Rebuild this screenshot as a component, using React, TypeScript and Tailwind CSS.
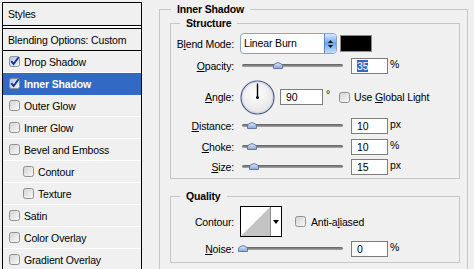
import React from "react";

function Box({ checked = false }: { checked?: boolean }) {
  return (
    <svg width="11" height="11" viewBox="0 0 11 11" className="shrink-0">
      <defs>
        <linearGradient id="cbu" x1="0" y1="0" x2="1" y2="1">
          <stop offset="0" stopColor="#d2d2d2" />
          <stop offset="1" stopColor="#fbfbfb" />
        </linearGradient>
        <linearGradient id="cbc" x1="0" y1="0" x2="1" y2="1">
          <stop offset="0" stopColor="#a9c6ee" />
          <stop offset="1" stopColor="#f3f8ff" />
        </linearGradient>
      </defs>
      <rect x="0.5" y="0.5" width="10" height="10" rx="2" fill={checked ? "url(#cbc)" : "url(#cbu)"} stroke="#8f9092" />
      {checked && <path d="M2.3 5.2 L4.6 8 L9.6 1.2" fill="none" stroke="#1c2f86" strokeWidth="1.9" />}
    </svg>
  );
}

function Slider({ pos }: { pos: number }) {
  return (
    <div className="relative w-[101px] h-[10px] ml-[8px] shrink-0">
      <div className="absolute left-0 right-0 top-[3px] h-[3px] rounded-full bg-gradient-to-b from-[#5e5e5e] to-[#a8a8a8]" />
      <svg className="absolute top-[1px]" style={{ left: pos - 5 }} width="10" height="7" viewBox="0 0 10 7">
        <defs>
          <linearGradient id="thg" x1="0" y1="0" x2="0" y2="1">
            <stop offset="0" stopColor="#e6eefb" />
            <stop offset="1" stopColor="#86a3d8" />
          </linearGradient>
        </defs>
        <path d="M0.5 6.5 V4 Q0.5 2.5 2 1.8 L5 0.5 L8 1.8 Q9.5 2.5 9.5 4 V6.5 Z" fill="url(#thg)" stroke="#6279ad" />
      </svg>
    </div>
  );
}

function Num({ children, w = "w-[37px]" }: { children: React.ReactNode; w?: string }) {
  return (
    <div className={`${w} h-[16px] shrink-0 border border-[#7d7d7d] bg-white pl-[5px] leading-[14px]`}>{children}</div>
  );
}

function Label({ children }: { children: React.ReactNode }) {
  return <div className="w-[63px] shrink-0 text-right whitespace-nowrap">{children}</div>;
}

function SliderRow({ label, pos, value, unit, sel = false }: { label: React.ReactNode; pos: number; value: string; unit: string; sel?: boolean }) {
  return (
    <div className="flex items-center h-[16px]">
      <Label>{label}</Label>
      <Slider pos={pos} />
      <div className="ml-[8px]">
        <Num>{sel ? <span className="bg-[#316ac5] text-white">{value}</span> : value}</Num>
      </div>
      <span className="ml-[2px] -mt-[4px]">{unit}</span>
    </div>
  );
}

const items = [
  { label: "Drop Shadow", checked: true },
  { label: "Inner Shadow", checked: true, sel: true },
  { label: "Outer Glow" },
  { label: "Inner Glow" },
  { label: "Bevel and Emboss" },
  { label: "Contour", sub: true },
  { label: "Texture", sub: true },
  { label: "Satin" },
  { label: "Color Overlay" },
  { label: "Gradient Overlay" },
];

const groupBox = "border border-[#c6c6c6] shadow-[inset_1px_1px_0_#ffffff,1px_1px_0_#ffffff]";

export default function App() {
  return (
    <div className="w-[474px] h-[269px] overflow-hidden bg-[#f0f0f0] flex items-start font-['Tahoma','Liberation_Sans',Arial,sans-serif] text-[10.5px] tracking-[-0.15px] leading-[14px] text-black">
      {/* Left styles list */}
      <div className="ml-[2px] mt-[2px] w-[140px] shrink-0 border-x border-t border-black bg-[#f0f0f0]">
        <div className="h-[23px] border-b border-black pl-[5px] flex items-center">Styles</div>
        <div className="h-[2px] bg-white" />
        <div className="h-[23px] border-y border-black pl-[5px] flex items-center">Blending Options: Custom</div>
        {items.map((it) => (
          <div
            key={it.label}
            className={`h-[22px] border-b flex items-center gap-[4px] ${it.sub ? "pl-[20px]" : "pl-[6px]"} ${
              it.sel ? "bg-[#316ac5] border-[#316ac5] text-white font-bold" : "border-white"
            }`}
          >
            <Box checked={!!it.checked} />
            <span>{it.label}</span>
          </div>
        ))}
      </div>

      {/* Right settings */}
      <fieldset className="ml-[17px] mt-[2px] w-[309px] shrink-0 border border-[#c6c6c6] pl-[10px] pr-[7px] pb-[20px] min-w-0">
        <legend className="ml-[1px] px-[6px] font-bold leading-[14px]">Inner Shadow</legend>

        <fieldset className="border border-[#c6c6c6] pt-[3px] pb-[3px] min-w-0">
          <legend className="ml-[9px] px-[6px] font-bold leading-[14px]">Structure</legend>

          <div className="flex items-center h-[21px]">
            <Label>
              B<u>l</u>end Mode:
            </Label>
            <div className="ml-[6px] w-[97px] h-[21px] flex rounded-[4px] border border-[#8aa3c2] bg-white overflow-hidden shrink-0">
              <span className="flex-1 pl-[3px] leading-[19px] whitespace-nowrap">Linear Burn</span>
              <div className="w-[12px] rounded-r-[3px] border-l border-[#5b87c7] bg-gradient-to-b from-[#d6e7fd] via-[#6aa5ec] to-[#c6e0fb] flex flex-col items-center justify-center gap-[2px]">
                <svg width="5" height="3" viewBox="0 0 5 3">
                  <path d="M2.5 0 L5 3 H0 Z" fill="#111" />
                </svg>
                <svg width="5" height="3" viewBox="0 0 5 3">
                  <path d="M0 0 H5 L2.5 3 Z" fill="#111" />
                </svg>
              </div>
            </div>
            <div className="ml-[3px] w-[32px] h-[17px] border border-[#8a8a8a] bg-black shrink-0" />
          </div>

          <div className="mt-[4px]">
            <SliderRow label={<><u>O</u>pacity:</>} pos={36} value="35" unit="%" sel />
          </div>

          <div className="mt-[5px] flex items-center h-[36px]">
            <Label>
              <u>A</u>ngle:
            </Label>
            <svg className="ml-[6px] shrink-0" width="35" height="35" viewBox="0 0 35 35">
              <defs>
                <radialGradient id="dial" cx="0.45" cy="0.4" r="0.6">
                  <stop offset="0" stopColor="#ffffff" />
                  <stop offset="1" stopColor="#e4e4e4" />
                </radialGradient>
              </defs>
              <circle cx="17.5" cy="17.5" r="16.5" fill="url(#dial)" stroke="#4b5a84" strokeWidth="1.2" />
              <circle cx="17.5" cy="17.5" r="15.3" fill="none" stroke="#c9cfdd" strokeWidth="0.8" />
              <line x1="17.5" y1="17.5" x2="17.5" y2="3.5" stroke="#000" strokeWidth="1.4" />
              <circle cx="17.5" cy="17.5" r="1.5" fill="#000" />
            </svg>
            <div className="ml-[5px]">
              <Num w="w-[43px]">90</Num>
            </div>
            <span className="ml-[3px] w-[13px] -mt-[6px] shrink-0">°</span>
            <Box />
            <span className="ml-[4px] whitespace-nowrap">
              Use <u>G</u>lobal Light
            </span>
          </div>

          <div className="mt-[3px]">
            <SliderRow label={<><u>D</u>istance:</>} pos={10} value="10" unit="px" />
          </div>
          <div className="mt-[5px]">
            <SliderRow label={<><u>C</u>hoke:</>} pos={10} value="10" unit="%" />
          </div>
          <div className="mt-[4px]">
            <SliderRow label={<><u>S</u>ize:</>} pos={12} value="15" unit="px" />
          </div>
        </fieldset>

        <fieldset className="mt-[10px] border border-[#c6c6c6] pt-[3px] pb-[5px] min-w-0">
          <legend className="ml-[9px] px-[6px] font-bold leading-[14px]">Quality</legend>

          <div className="flex items-center h-[31px]">
            <Label>Contour:</Label>
            <div className="ml-[6px] w-[42px] h-[31px] border border-black bg-white flex shrink-0">
              <svg width="29" height="29" viewBox="0 0 29 29" className="shrink-0">
                <polygon points="0,29 29,0 29,29" fill="#c4c4c4" />
              </svg>
              <div className="w-px bg-[#8a8a8a]" />
              <div className="flex-1 flex items-center justify-center">
                <svg width="6" height="4" viewBox="0 0 6 4">
                  <path d="M0 0 H6 L3 4 Z" fill="#000" />
                </svg>
              </div>
            </div>
            <div className="ml-[13px] flex items-center">
              <Box />
            </div>
            <span className="ml-[5px] whitespace-nowrap">
              Anti-a<u>l</u>iased
            </span>
          </div>

          <div className="mt-[4px]">
            <SliderRow label={<><u>N</u>oise:</>} pos={1} value="0" unit="%" />
          </div>
        </fieldset>
      </fieldset>
    </div>
  );
}
